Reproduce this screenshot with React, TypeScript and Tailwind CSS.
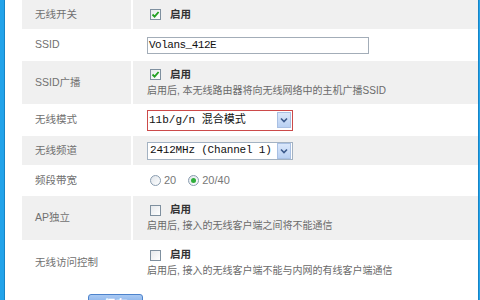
import React from "react";

const sans = { fontFamily: '"Liberation Sans", "Noto Sans CJK SC", sans-serif' };
const mono = { fontFamily: '"Liberation Mono", "Noto Sans CJK SC", monospace' };

function Check({ checked }: { checked: boolean }) {
  return (
    <span className="ml-[3px] w-[11px] h-[11px] border border-[#7f909f] bg-gradient-to-br from-[#e6e9ec] to-white flex items-center justify-center shrink-0">
      {checked && (
        <svg width="9" height="9" viewBox="0 0 9 9">
          <path d="M1.5 4.5 L3.6 6.6 L7.6 2" stroke="#22a022" strokeWidth="1.8" fill="none" />
        </svg>
      )}
    </span>
  );
}

function Radio({ checked }: { checked: boolean }) {
  return (
    <span className="w-[11px] h-[11px] rounded-full border border-[#8a9db0] bg-gradient-to-br from-[#dfe4ea] to-white flex items-center justify-center shrink-0">
      {checked && <span className="w-[5px] h-[5px] rounded-full bg-[#2fae3a]" />}
    </span>
  );
}

function Enable({ checked }: { checked: boolean }) {
  return (
    <div className="flex items-center h-[14px]">
      <Check checked={checked} />
      <span className="ml-[9px] text-[10.5px] font-bold text-[#333]">启用</span>
    </div>
  );
}

function Desc({ children }: { children: React.ReactNode }) {
  return <div className="text-[10px] leading-[14px] text-[#6a6a6a] whitespace-nowrap">{children}</div>;
}

function Arrow() {
  return (
    <span className="w-[14px] h-[16px] mr-[1px] bg-gradient-to-b from-[#dbe8fb] to-[#b9d0f2] border border-[#a9c0e3] flex items-center justify-center">
      <svg width="8" height="6" viewBox="0 0 8 6">
        <path d="M1 1.5 L4 4.5 L7 1.5" stroke="#3c5a8c" strokeWidth="1.6" fill="none" />
      </svg>
    </span>
  );
}

function Row({ label, h, gray, children }: { label: string; h: string; gray?: boolean; children: React.ReactNode }) {
  const bg = gray ? "bg-[#f0f0f0]" : "bg-white";
  return (
    <div className={`grid grid-cols-[109px_345px] gap-x-[2px] shrink-0 ${h}`}>
      <div className={`${bg} pl-[13px] flex items-center text-[10.5px] text-[#707070]`}>{label}</div>
      <div className={`${bg} pl-[14px] flex flex-col justify-center`}>{children}</div>
    </div>
  );
}

export default function App() {
  return (
    <div className="w-[480px] h-[300px] overflow-hidden flex bg-white" style={sans}>
      <div className="w-[5px] bg-[#22a3ea] border-r border-[#1684c6] shrink-0" />
      <div className="flex-1 pl-[17px] flex flex-col">
        <Row label="无线开关" h="h-[29px]" gray>
          <Enable checked />
        </Row>
        <Row label="SSID" h="h-[32px]">
          <div className="w-[222px] h-[17px] border border-[#a3adb8] bg-white flex items-center pl-[1px] text-[11px] text-[#111] tracking-[-0.5px]" style={mono}>
            Volans_412E
          </div>
        </Row>
        <Row label="SSID广播" h="h-[43px]" gray>
          <Enable checked />
          <div className="mt-[2px]">
            <Desc>启用后, 本无线路由器将向无线网络中的主机广播SSID</Desc>
          </div>
        </Row>
        <Row label="无线模式" h="h-[32px]">
          <div className="w-[146px] h-[21px] border border-[#cc4a4a] bg-white flex items-center justify-between">
            <span className="pl-[1px] text-[11px] text-[#111]" style={mono}>11b/g/n 混合模式</span>
            <Arrow />
          </div>
        </Row>
        <Row label="无线频道" h="h-[29px]" gray>
          <div className="w-[146px] h-[18px] border border-[#a3b2c2] bg-white flex items-center justify-between">
            <span className="pl-[2px] text-[11px] text-[#111] tracking-[-0.2px]" style={mono}>2412MHz (Channel 1)</span>
            <Arrow />
          </div>
        </Row>
        <Row label="频段带宽" h="h-[31px]">
          <div className="flex items-center text-[11px] text-[#777]">
            <span className="ml-[3px]"><Radio checked={false} /></span>
            <span className="ml-[3px]">20</span>
            <span className="ml-[12px]"><Radio checked /></span>
            <span className="ml-[3px]">20/40</span>
          </div>
        </Row>
        <Row label="AP独立" h="h-[44px]" gray>
          <Enable checked={false} />
          <div className="mt-[2px]">
            <Desc>启用后, 接入的无线客户端之间将不能通信</Desc>
          </div>
        </Row>
        <Row label="无线访问控制" h="h-[46px]">
          <Enable checked={false} />
          <div className="mt-[2px]">
            <Desc>启用后, 接入的无线客户端不能与内网的有线客户端通信</Desc>
          </div>
        </Row>
        <div className="mt-[8px] ml-[66px] shrink-0">
          <div className="w-[55px] h-[22px] rounded-[3px] border border-[#4d83cc] bg-gradient-to-b from-[#a9c9f3] to-[#5c93de] flex items-center justify-center text-[12px] font-bold text-white">
            保存
          </div>
        </div>
      </div>
      <div className="w-[2px] bg-[#22a3ea] border-l border-[#1684c6] shrink-0" />
    </div>
  );
}
